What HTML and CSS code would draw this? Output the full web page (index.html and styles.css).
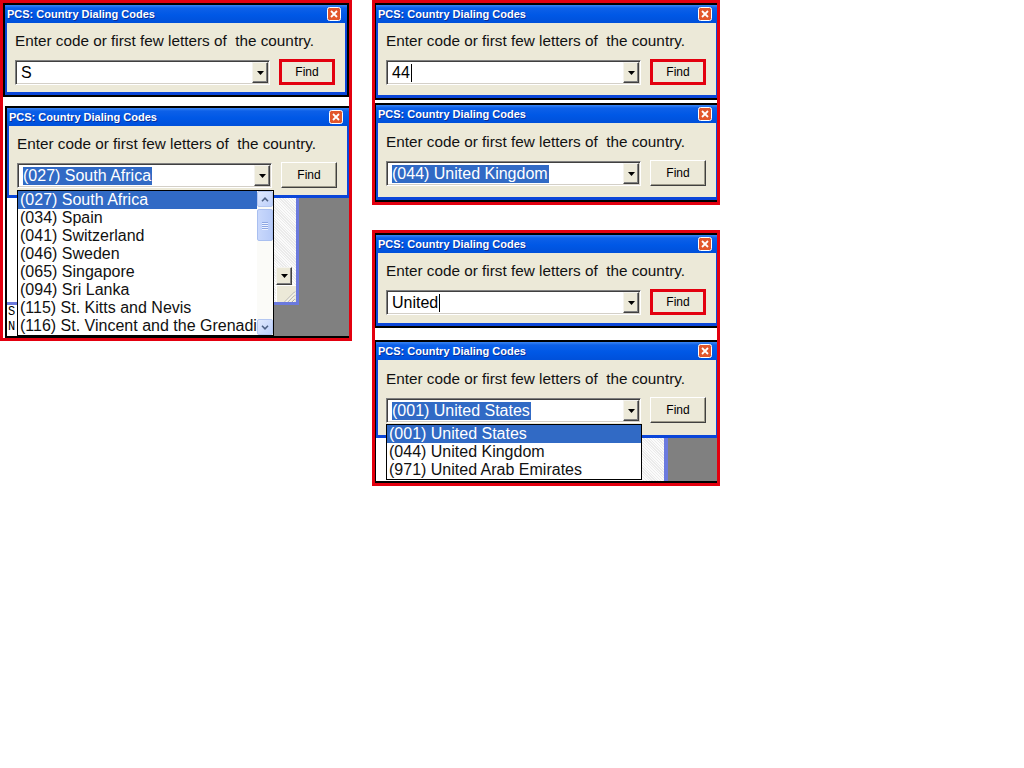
FILE: index.html
```html
<!DOCTYPE html>
<html>
<head>
<meta charset="utf-8">
<title>PCS: Country Dialing Codes</title>
<link rel="stylesheet" href="styles.css">
</head>
<body>
<div class="page">
  <div class="group g-left">
    <div class="win">
      <div class="title"><span>PCS: Country Dialing Codes</span><svg class="close" viewBox="0 0 14 14"><rect x="0.5" y="0.5" width="13" height="13" rx="2" fill="#e2572c" stroke="#fff"/><path d="M4 4L10 10M10 4L4 10" stroke="#fff" stroke-width="1.8"/></svg></div>
      <div class="client c-9-7">
        <div class="label">Enter code or first few letters of  the country.</div>
        <div class="row">
          <div class="combo"><div class="val">S</div><div class="dd"><svg viewBox="0 0 7 4"><path d="M0 0H7L3.5 4Z"/></svg></div></div>
          <div class="btn hl">Find</div>
        </div>
      </div>
    </div>
    <div class="win w-shift w-gap">
      <div class="title"><span>PCS: Country Dialing Codes</span><svg class="close" viewBox="0 0 14 14"><rect x="0.5" y="0.5" width="13" height="13" rx="2" fill="#e2572c" stroke="#fff"/><path d="M4 4L10 10M10 4L4 10" stroke="#fff" stroke-width="1.8"/></svg></div>
      <div class="client c-9-7">
        <div class="label">Enter code or first few letters of  the country.</div>
        <div class="row">
          <div class="combo"><div class="val"><span class="sel">(027) South Africa</span></div><div class="dd"><svg viewBox="0 0 7 4"><path d="M0 0H7L3.5 4Z"/></svg></div></div>
          <div class="btn">Find</div>
        </div>
      </div>
      <div class="behind behind-l">
        <div class="panel">
          <div class="hatch">
            <div class="mini-dd"><svg viewBox="0 0 7 4"><path d="M0 0H7L3.5 4Z"/></svg></div>
            <svg class="grip" viewBox="0 0 20 17"><path d="M19 6L8 17M19 10L12 17M19 14L16 17" stroke="#9a9a9a" stroke-width="1"/><path d="M19 7L9 17M19 11L13 17M19 15L17 17" stroke="#fff" stroke-width="1"/></svg>
          </div>
        </div>
        <div class="mono">S<br>N</div>
      </div>
      <div class="list list-l">
        <div class="items">
          <div class="item on">(027) South Africa</div>
          <div class="item">(034) Spain</div>
          <div class="item">(041) Switzerland</div>
          <div class="item">(046) Sweden</div>
          <div class="item">(065) Singapore</div>
          <div class="item">(094) Sri Lanka</div>
          <div class="item">(115) St. Kitts and Nevis</div>
          <div class="item">(116) St. Vincent and the Grenadines</div>
        </div>
        <div class="sb">
          <div class="sb-btn"><svg viewBox="0 0 8 5"><path d="M1 4.2L4 1.2L7 4.2" fill="none" stroke="#4d6185" stroke-width="1.6"/></svg></div>
          <div class="thumb"><i></i><i></i><i></i><i></i></div>
          <div class="sb-fill"></div>
          <div class="sb-btn"><svg viewBox="0 0 8 5"><path d="M1 0.8L4 3.8L7 0.8" fill="none" stroke="#4d6185" stroke-width="1.6"/></svg></div>
        </div>
      </div>
    </div>
  </div>

  <div class="col-right">
    <div class="group g-r1">
      <div class="win w-back">
        <div class="title"><span>PCS: Country Dialing Codes</span><svg class="close" viewBox="0 0 14 14"><rect x="0.5" y="0.5" width="13" height="13" rx="2" fill="#e2572c" stroke="#fff"/><path d="M4 4L10 10M10 4L4 10" stroke="#fff" stroke-width="1.8"/></svg></div>
        <div class="client c-9-10">
          <div class="label">Enter code or first few letters of  the country.</div>
          <div class="row">
            <div class="combo"><div class="val">44<span class="caret"></span></div><div class="dd"><svg viewBox="0 0 7 4"><path d="M0 0H7L3.5 4Z"/></svg></div></div>
            <div class="btn hl">Find</div>
          </div>
        </div>
      </div>
      <div class="win w-back w-gap3">
        <div class="title"><span>PCS: Country Dialing Codes</span><svg class="close" viewBox="0 0 14 14"><rect x="0.5" y="0.5" width="13" height="13" rx="2" fill="#e2572c" stroke="#fff"/><path d="M4 4L10 10M10 4L4 10" stroke="#fff" stroke-width="1.8"/></svg></div>
        <div class="client c-10-11">
          <div class="label">Enter code or first few letters of  the country.</div>
          <div class="row">
            <div class="combo"><div class="val"><span class="sel">(044) United Kingdom</span></div><div class="dd"><svg viewBox="0 0 7 4"><path d="M0 0H7L3.5 4Z"/></svg></div></div>
            <div class="btn">Find</div>
          </div>
        </div>
      </div>
    </div>

    <div class="group g-r2">
      <div class="win w-back">
        <div class="title"><span>PCS: Country Dialing Codes</span><svg class="close" viewBox="0 0 14 14"><rect x="0.5" y="0.5" width="13" height="13" rx="2" fill="#e2572c" stroke="#fff"/><path d="M4 4L10 10M10 4L4 10" stroke="#fff" stroke-width="1.8"/></svg></div>
        <div class="client c-9-8">
          <div class="label">Enter code or first few letters of  the country.</div>
          <div class="row">
            <div class="combo"><div class="val">United<span class="caret"></span></div><div class="dd"><svg viewBox="0 0 7 4"><path d="M0 0H7L3.5 4Z"/></svg></div></div>
            <div class="btn hl">Find</div>
          </div>
        </div>
      </div>
      <div class="win w-back w-gap12">
        <div class="title"><span>PCS: Country Dialing Codes</span><svg class="close" viewBox="0 0 14 14"><rect x="0.5" y="0.5" width="13" height="13" rx="2" fill="#e2572c" stroke="#fff"/><path d="M4 4L10 10M10 4L4 10" stroke="#fff" stroke-width="1.8"/></svg></div>
        <div class="client c-10-12">
          <div class="label">Enter code or first few letters of  the country.</div>
          <div class="row">
            <div class="combo"><div class="val"><span class="sel">(001) United States</span></div><div class="dd"><svg viewBox="0 0 7 4"><path d="M0 0H7L3.5 4Z"/></svg></div></div>
            <div class="btn">Find</div>
          </div>
        </div>
        <div class="behind behind-r">
          <div class="panel">
            <div class="hatch"></div>
          </div>
        </div>
        <div class="list list-r">
          <div class="items">
            <div class="item on">(001) United States</div>
            <div class="item">(044) United Kingdom</div>
            <div class="item">(971) United Arab Emirates</div>
          </div>
        </div>
      </div>
    </div>
  </div>
</div>
</body>
</html>
```
FILE: styles.css
```css
* { box-sizing: border-box; }

body {
  margin: 0;
  background: #fff;
  font-family: "Liberation Sans", Arial, sans-serif;
  color: #000;
}

.page {
  display: flex;
  align-items: flex-start;
  gap: 20px;
}

.col-right {
  display: flex;
  flex-direction: column;
  gap: 25px;
}

.group {
  border: 3px solid #e3000f;
  background: #fff;
  overflow: hidden;
}

.g-left { width: 352px; height: 341px; }
.g-r1 { width: 348px; height: 205px; }
.g-r2 { width: 348px; height: 256px; }

/* window */
.win {
  position: relative;
  width: 346px;
  border: 2px solid #000;
  background: #0b46d9;
}

.w-shift { margin-left: 2px; }
.w-back { margin-left: -1px; }
.w-gap { margin-top: 9px; }
.w-gap3 { margin-top: 3px; }
.w-gap12 { margin-top: 12px; }

.title {
  height: 18px;
  display: flex;
  align-items: center;
  justify-content: space-between;
  padding: 0 6px 0 2px;
  background: linear-gradient(#3b86f4 0, #0d60e8 3px, #0058e6 55%, #0050da 100%);
  color: #fff;
  font: bold 11px "Liberation Sans", Arial, sans-serif;
  text-shadow: 1px 1px 0 #0a2f9a;
}

.close {
  width: 14px;
  height: 14px;
  display: block;
}

.client {
  margin: 0 2px 3px;
  background: #ece9d8;
  padding-left: 8px;
}

.c-9-7 { padding-top: 9px; padding-bottom: 7px; }
.c-9-10 { padding-top: 9px; padding-bottom: 10px; }
.c-10-11 { padding-top: 10px; padding-bottom: 11px; }
.c-9-8 { padding-top: 9px; padding-bottom: 8px; }
.c-10-12 { padding-top: 10px; padding-bottom: 12px; }

.label {
  font-size: 15.3px;
  line-height: 18px;
  white-space: pre;
  color: #111;
}

.row {
  display: flex;
  gap: 9px;
  margin-top: 9px;
  height: 26px;
  align-items: flex-start;
}

/* combo box */
.combo {
  margin-top: 1px;
  width: 255px;
  height: 25px;
  display: flex;
  background: #fff;
  border: 1px solid;
  border-color: #808080 #ffffff #ffffff #808080;
  box-shadow: inset 1px 1px 0 #404040, inset -1px -1px 0 #d4d0c8;
  padding: 1px;
}

.val {
  flex: 1;
  display: flex;
  align-items: center;
  padding-left: 4px;
  font-size: 16px;
  line-height: 18px;
  white-space: nowrap;
  overflow: hidden;
}

.sel {
  background: #316ac5;
  color: #fff;
  padding-right: 1px;
}

.caret {
  display: inline-block;
  width: 1px;
  height: 18px;
  background: #000;
  margin-left: 1px;
}

.dd, .mini-dd {
  width: 16px;
  height: 21px;
  background: #ece9d8;
  border: 1px solid;
  border-color: #f4f3ee #404040 #404040 #f4f3ee;
  box-shadow: inset -1px -1px 0 #808080;
  display: flex;
  align-items: center;
  justify-content: center;
}

.dd svg, .mini-dd svg {
  width: 7px;
  height: 4px;
  display: block;
}

/* button */
.btn {
  width: 56px;
  height: 26px;
  display: flex;
  align-items: center;
  justify-content: center;
  font-size: 12px;
  background: #ece9d8;
  border: 1px solid;
  border-color: #ffffff #404040 #404040 #ffffff;
  box-shadow: inset -1px -1px 0 #9d9a8a;
}

.btn.hl {
  border: 3px solid #e3000f;
  box-shadow: none;
}

/* window contents behind the drop-down list */
.behind {
  display: flex;
  flex-direction: column;
  align-items: flex-start;
  background: #808080;
}

.behind-l { height: 138px; }
.behind-r { height: 43px; }

.panel {
  display: flex;
  justify-content: flex-end;
  background: #fff;
  border-right: 3px solid #6b7ade;
}

.behind-l .panel {
  width: 292px;
  height: 107px;
  border-bottom: 3px solid #6b7ade;
}

.behind-r .panel {
  width: 292px;
  height: 43px;
  border-right-width: 4px;
}

.hatch {
  width: 22px;
  height: 100%;
  display: flex;
  flex-direction: column;
  justify-content: flex-end;
  align-items: flex-start;
  background: repeating-linear-gradient(45deg, #fbfbfb 0 1px, #ebebeb 1px 2px);
}

.mini-dd {
  margin-left: 2px;
  height: 18px;
}

.grip {
  width: 20px;
  height: 17px;
  display: block;
  margin-left: 2px;
  background: #ece9d8;
  border-left: 1px solid #fff;
  border-top: 1px solid #fff;
}

.mono {
  width: 10px;
  height: 31px;
  background: #fff;
  font: 12px "Liberation Mono", monospace;
  line-height: 15px;
  overflow: hidden;
  padding-left: 1px;
}

/* drop-down list */
.list {
  position: absolute;
  left: 10px;
  top: 82px;
  display: flex;
  background: #fff;
  border: 1px solid #000;
}

.list-l { width: 257px; height: 146px; }
.list-r { width: 256px; height: 56px; }

.items {
  flex: 1;
  overflow: hidden;
}

.item {
  height: 18px;
  line-height: 18px;
  padding-left: 2px;
  font-size: 16px;
  white-space: nowrap;
  color: #111;
}

.item.on {
  background: #316ac5;
  color: #fff;
}

.sb {
  width: 16px;
  display: flex;
  flex-direction: column;
  background: #fbfbf8;
}

.sb-btn {
  width: 16px;
  height: 16px;
  display: flex;
  align-items: center;
  justify-content: center;
  background: linear-gradient(135deg, #e1eafe, #bccffa);
  border: 1px solid #b4c7f1;
  border-radius: 2px;
}

.sb-btn svg {
  width: 8px;
  height: 5px;
  display: block;
}

.thumb {
  margin-top: 2px;
  height: 32px;
  display: flex;
  flex-direction: column;
  align-items: center;
  justify-content: center;
  gap: 1px;
  background: linear-gradient(90deg, #c9d8fc, #b7cbf8);
  border: 1px solid #a9bff0;
  border-radius: 2px;
}

.thumb i {
  display: block;
  width: 6px;
  height: 1px;
  background: #8ea7e3;
  box-shadow: 0 1px 0 #eef3ff;
}

.sb-fill { flex: 1; }
```
